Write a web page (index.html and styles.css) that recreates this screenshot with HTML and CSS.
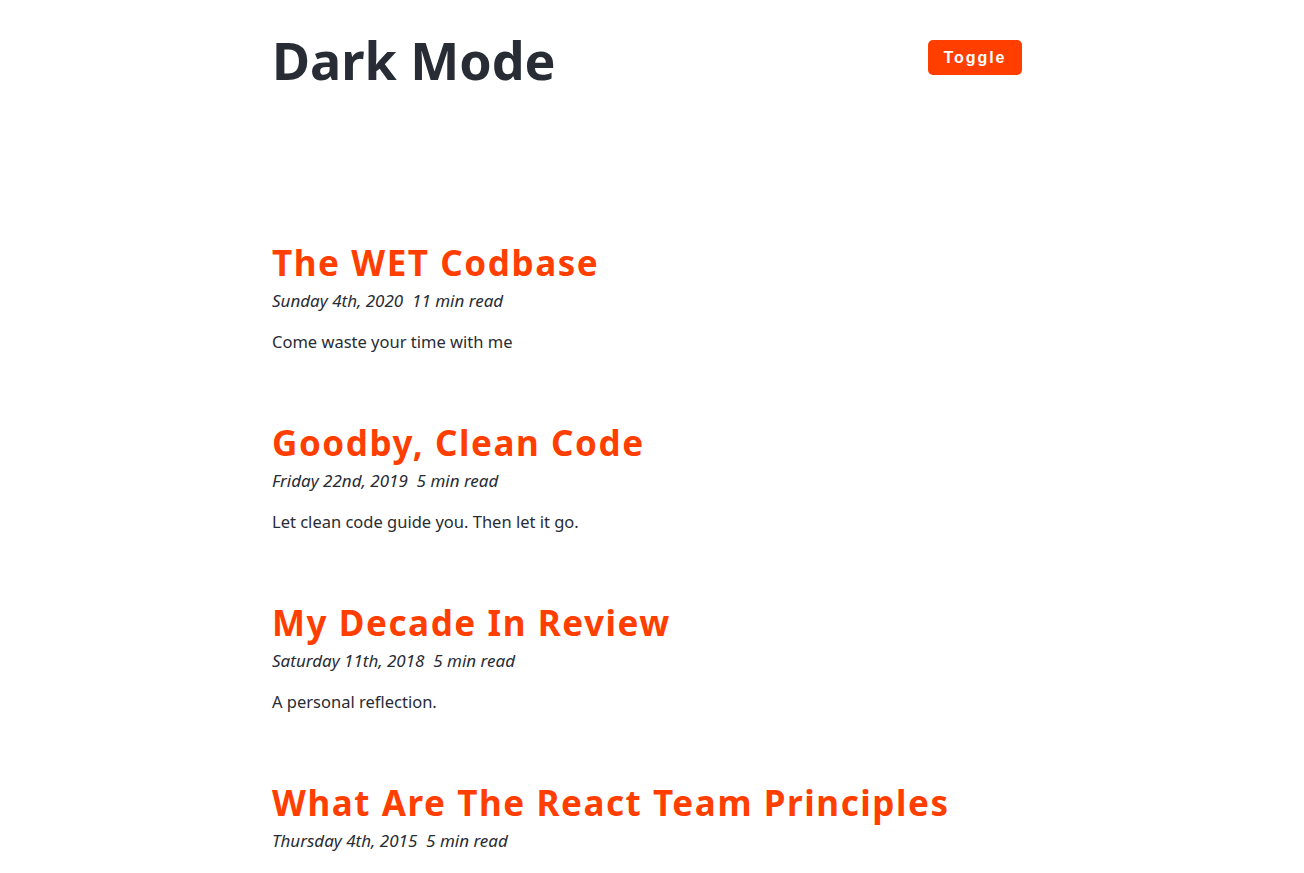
FILE: index.html
```html
<!DOCTYPE html>
<html>
<head>
<meta charset="utf-8">
<link rel="stylesheet" href="styles.css">
</head>
<body>
<div class="page">
  <header class="header">
    <h1 class="site-title">Dark Mode</h1>
    <button class="toggle">Toggle</button>
  </header>
  <main class="posts">
    <article class="post">
      <h2 class="post-title">The WET Codbase</h2>
      <div class="meta">Sunday 4th, 2020&nbsp;&nbsp;11 min read</div>
      <p class="excerpt">Come waste your time with me</p>
    </article>
    <article class="post">
      <h2 class="post-title">Goodby, Clean Code</h2>
      <div class="meta">Friday 22nd, 2019&nbsp;&nbsp;5 min read</div>
      <p class="excerpt">Let clean code guide you. Then let it go.</p>
    </article>
    <article class="post">
      <h2 class="post-title">My Decade In Review</h2>
      <div class="meta">Saturday 11th, 2018&nbsp;&nbsp;5 min read</div>
      <p class="excerpt">A personal reflection.</p>
    </article>
    <article class="post">
      <h2 class="post-title">What Are The React Team Principles</h2>
      <div class="meta">Thursday 4th, 2015&nbsp;&nbsp;5 min read</div>
    </article>
  </main>
</div>
</body>
</html>
```
FILE: styles.css
```css
html, body {
  margin: 0;
  padding: 0;
  background: #ffffff;
}
body {
  font-family: "Noto Sans", "Open Sans", sans-serif;
  color: #282c35;
  padding-right: 10px;
}
.page {
  width: 750px;
  margin: 0 auto;
}
.header {
  display: flex;
  justify-content: space-between;
  align-items: flex-start;
  padding-top: 32px;
}
.site-title {
  margin: 0;
  font-size: 52px;
  line-height: 56px;
  font-weight: 700;
  letter-spacing: 0;
  color: #282c35;
}
.toggle {
  margin-top: 8px;
  width: 94px;
  height: 35px;
  border: none;
  border-radius: 5px;
  background: #ff3e00;
  color: #ffffff;
  font-family: "Liberation Sans", Arial, sans-serif;
  font-weight: 700;
  font-size: 16px;
  letter-spacing: 0.12em;
  padding: 0;
}
.posts {
  padding-top: 153px;
}
.post {
  margin-bottom: 67px;
}
.post-title {
  margin: 0;
  font-size: 35px;
  line-height: 44px;
  font-weight: 700;
  letter-spacing: 0.045em;
  color: #ff3e00;
}
.meta {
  margin-top: 4px;
  font-size: 17px;
  line-height: 24px;
  font-style: italic;
}
.excerpt {
  margin: 17px 0 0;
  font-size: 16.5px;
  line-height: 24px;
}
```
